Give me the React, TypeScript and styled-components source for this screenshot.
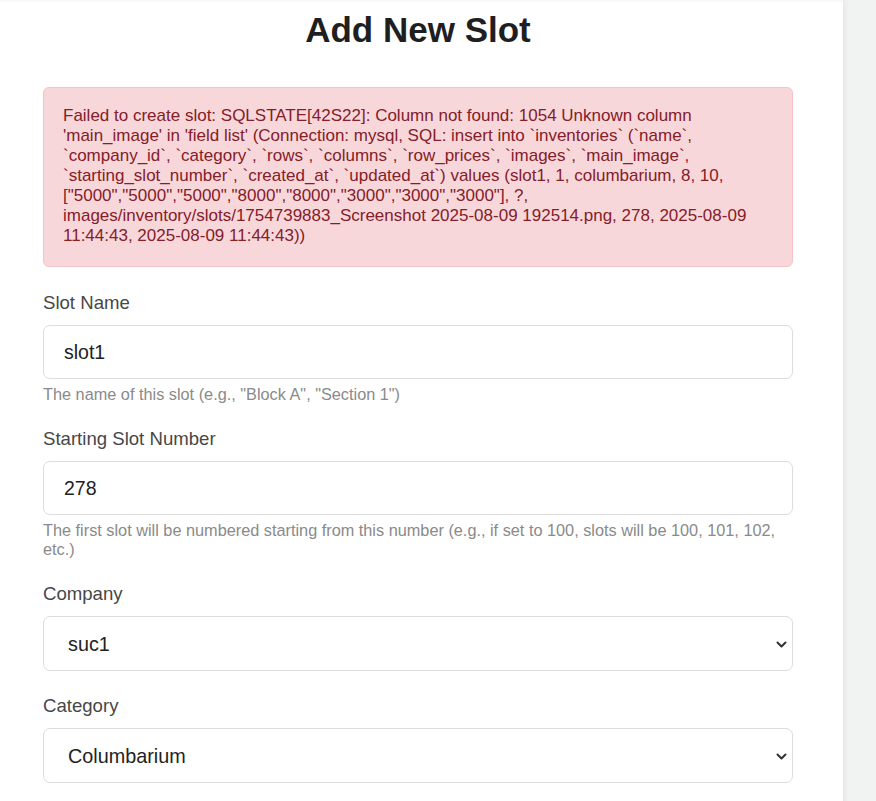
import React from "react";
import styled, { createGlobalStyle } from "styled-components";

const GlobalStyle = createGlobalStyle`
  html, body {
    margin: 0;
    padding: 0;
    background: #f1f2f2;
    font-family: "Liberation Sans", Arial, sans-serif;
  }
  * { box-sizing: border-box; }
`;

const Page = styled.div`
  display: flex;
  min-height: 801px;
  background: #f1f2f2;
`;

const Panel = styled.main`
  width: 843px;
  background: #ffffff;
  padding: 11px 50px 16px 43px;
  box-shadow: 1px 0 6px rgba(0, 0, 0, 0.07), inset 0 3px 3px -2px rgba(0, 0, 0, 0.05);
`;

const Form = styled.form`
  width: 750px;
  display: flex;
  flex-direction: column;
`;

const Title = styled.h1`
  margin: 0 0 39px;
  font-size: 35px;
  line-height: 37px;
  font-weight: 700;
  color: #1f1f1f;
  text-align: center;
`;

const Alert = styled.div`
  background: #f8d7da;
  border: 1px solid #f5c2c7;
  border-radius: 6px;
  color: #842029;
  padding: 18px 19px 20px;
  font-size: 17px;
  line-height: 20px;
  margin-bottom: 25px;
  overflow-wrap: break-word;
`;

const Group = styled.div`
  display: flex;
  flex-direction: column;
  margin-bottom: 24px;
`;

const Label = styled.label`
  display: block;
  font-size: 18.6px;
  line-height: 22px;
  color: #474747;
  margin-bottom: 11px;
`;

const Field = styled.input`
  width: 100%;
  height: 54px;
  padding: 0 20px;
  border: 1px solid #dcdcdc;
  border-radius: 7px;
  font-family: inherit;
  font-size: 19.5px;
  color: #222;
  background: #fff;
  outline: none;
`;

const SelectWrap = styled.div`
  position: relative;
`;

const Select = styled.select`
  width: 100%;
  height: 55px;
  padding: 0 40px 0 24px;
  border: 1px solid #dcdcdc;
  border-radius: 7px;
  font-family: inherit;
  font-size: 19.8px;
  color: #222;
  background: #fff;
  appearance: none;
  -webkit-appearance: none;
  outline: none;
`;

const Chevron = styled.svg`
  position: absolute;
  right: 6px;
  top: 50%;
  width: 11px;
  height: 7px;
  margin-top: -3px;
  pointer-events: none;
`;

const Hint = styled.small`
  display: block;
  margin-top: 6px;
  font-size: 16.3px;
  line-height: 19px;
  color: #8a8a8a;
`;

const ChevronIcon = () => (
  <Chevron viewBox="0 0 11 7" fill="none">
    <path d="M1.5 1.5 L5.5 5.5 L9.5 1.5" stroke="#333" strokeWidth="2" strokeLinecap="round" strokeLinejoin="round" />
  </Chevron>
);

const errorText =
  "Failed to create slot: SQLSTATE[42S22]: Column not found: 1054 Unknown column 'main_image' in 'field list' (Connection: mysql, SQL: insert into `inventories` (`name`, `company_id`, `category`, `rows`, `columns`, `row_prices`, `images`, `main_image`, `starting_slot_number`, `created_at`, `updated_at`) values (slot1, 1, columbarium, 8, 10, [\"5000\",\"5000\",\"5000\",\"8000\",\"8000\",\"3000\",\"3000\",\"3000\"], ?, images/inventory/slots/1754739883_Screenshot 2025-08-09 192514.png, 278, 2025-08-09 11:44:43, 2025-08-09 11:44:43))";

export default function App() {
  return (
    <>
      <GlobalStyle />
      <Page>
        <Panel>
          <Form onSubmit={(e) => e.preventDefault()}>
            <Title>Add New Slot</Title>
            <Alert role="alert">{errorText}</Alert>

            <Group>
              <Label htmlFor="name">Slot Name</Label>
              <Field id="name" defaultValue="slot1" />
              <Hint>The name of this slot (e.g., "Block A", "Section 1")</Hint>
            </Group>

            <Group>
              <Label htmlFor="start">Starting Slot Number</Label>
              <Field id="start" defaultValue="278" />
              <Hint>
                The first slot will be numbered starting from this number (e.g., if set to 100, slots will be 100, 101, 102, etc.)
              </Hint>
            </Group>

            <Group>
              <Label htmlFor="company">Company</Label>
              <SelectWrap>
                <Select id="company" defaultValue="1">
                  <option value="1">suc1</option>
                </Select>
                <ChevronIcon />
              </SelectWrap>
            </Group>

            <Group>
              <Label htmlFor="category">Category</Label>
              <SelectWrap>
                <Select id="category" defaultValue="columbarium">
                  <option value="columbarium">Columbarium</option>
                </Select>
                <ChevronIcon />
              </SelectWrap>
            </Group>
          </Form>
        </Panel>
      </Page>
    </>
  );
}
